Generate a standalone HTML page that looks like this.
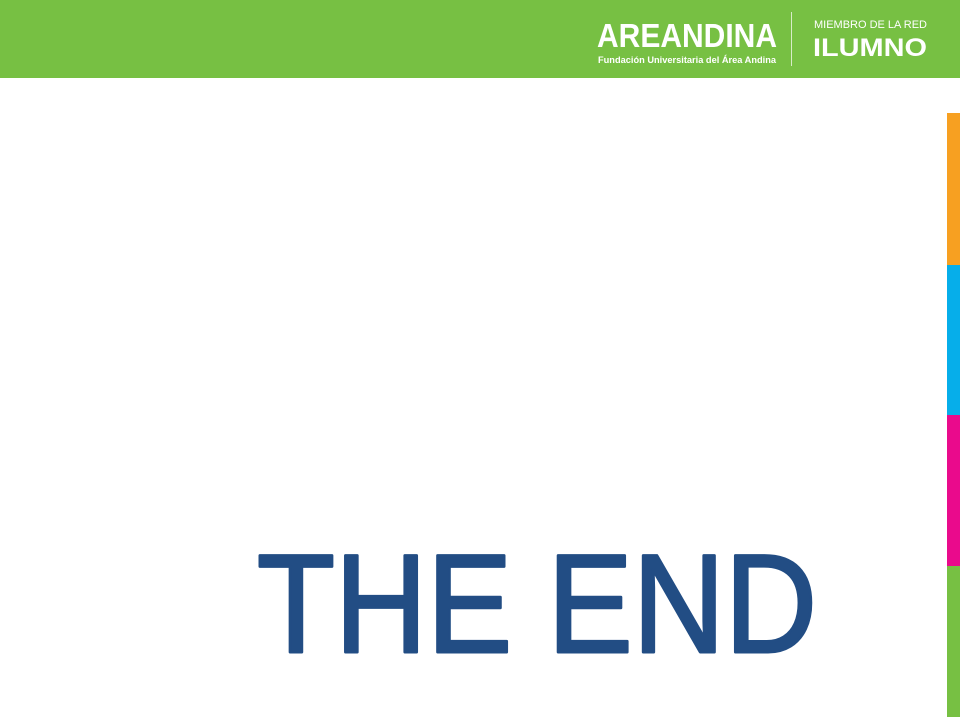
<!DOCTYPE html>
<html><head><meta charset="utf-8"><style>
html,body{margin:0;padding:0;width:960px;height:720px;background:#fff;overflow:hidden;font-family:"Liberation Sans",sans-serif}
.hdr{position:absolute;left:0;top:0;width:960px;height:78px;background:#77c043}
.bar{position:absolute;left:947px;width:13px}
</style></head><body>
<div class="hdr"></div>
<svg width="960" height="720" style="position:absolute;left:0;top:0">
<text x="597" y="47" font-family="Liberation Sans, sans-serif" font-weight="bold" font-size="33" fill="#fff" textLength="180" lengthAdjust="spacingAndGlyphs">AREANDINA</text>
<text x="598" y="63" font-family="Liberation Sans, sans-serif" font-weight="bold" font-size="9.5" fill="#fff" textLength="178" lengthAdjust="spacingAndGlyphs">Fundación Universitaria del Área Andina</text>
<rect x="791" y="12" width="1" height="54" fill="#d8ecc8"/>
<text x="814" y="28" font-family="Liberation Sans, sans-serif" font-size="11" fill="#fff" textLength="113" lengthAdjust="spacingAndGlyphs">MIEMBRO DE LA RED</text>
<text x="813" y="56" font-family="Liberation Sans, sans-serif" font-weight="bold" font-size="25" fill="#fff" textLength="114" lengthAdjust="spacingAndGlyphs">ILUMNO</text>
<text x="257" y="652" font-family="Liberation Sans, sans-serif" font-size="140" fill="#224d84" stroke="#224d84" stroke-width="3" stroke-linejoin="round" textLength="560" lengthAdjust="spacingAndGlyphs">THE END</text>
</svg>
<div class="bar" style="top:113px;height:152px;background:#f7a021"></div>
<div class="bar" style="top:265px;height:150px;background:#06aeea"></div>
<div class="bar" style="top:415px;height:151px;background:#ea0a8c"></div>
<div class="bar" style="top:566px;height:151px;background:#77c043"></div>
</body></html>
